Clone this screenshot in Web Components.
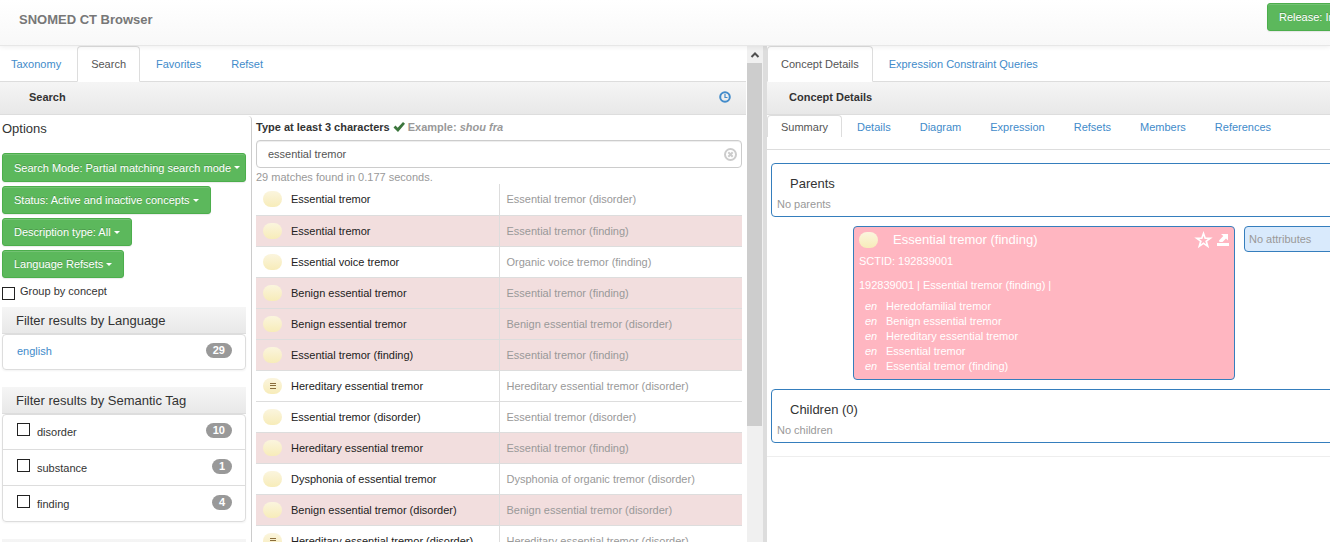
<!DOCTYPE html>
<html lang="en">
<head>
<meta charset="utf-8">
<title>SNOMED CT Browser</title>
<style>
html,body{margin:0;height:100%}
body{font:11px/16px "Liberation Sans",Arial,sans-serif;color:#333;background:#fff;overflow:hidden}
</style>
</head>
<body>
<ct-app></ct-app>
<script>
const define = (name, css, html, setup) => {
  const t = document.createElement('template');
  t.innerHTML = `<style>:host{display:block}*{box-sizing:border-box}a{text-decoration:none;color:#428bca}${css}</style>${html}`;
  customElements.define(name, class extends HTMLElement {
    constructor() {
      super();
      this.attachShadow({mode: 'open'}).append(t.content.cloneNode(true));
    }
    connectedCallback() {
      if (setup && !this.ready) { this.ready = true; setup(this, this.shadowRoot); }
    }
  });
};

/* Green Bootstrap-style button */
define('ct-button', `
:host{display:block}
button{font:inherit;color:#fff;background:#5cb85c;border:1px solid #4cae4c;border-radius:3px;height:28px;padding:0 11px;
 display:flex;align-items:center;gap:3px;white-space:nowrap;text-shadow:0 -1px 0 rgba(0,0,0,.2);box-shadow:inset 0 1px 0 rgba(255,255,255,.15),0 1px 1px rgba(0,0,0,.08)}
i{border:3px solid transparent;border-top-color:#fff;border-bottom:0}
:host([wide]) button{width:100%;height:29px;padding-right:4px}
:host([plain]) i{display:none}`,
`<button type="button"><slot></slot><i></i></button>`);

define('ct-header', `
:host{position:relative;z-index:1;min-width:0}
header{display:grid;grid-template-columns:minmax(0,1267fr) minmax(0,63fr);height:46px;border-bottom:1px solid #e7e7e7;background:linear-gradient(#fff,#f8f8f8);box-shadow:0 1px 5px rgba(0,0,0,.07)}
h1{margin:0;padding:10px 19px;font-size:13px;line-height:19px;font-weight:bold;color:#777}
ct-button{margin-top:3px;width:120px}`,
`<header><h1>SNOMED CT Browser</h1><ct-button plain>Release: In</ct-button></header>`);

/* Tab strip; labels come from the "items" attribute, first one or "active" is selected */
define('ct-tabs', `
nav{display:flex;gap:2px;height:36px;border-bottom:1px solid #ddd}
a{padding:9px 13px;border:1px solid transparent;border-radius:4px 4px 0 0;white-space:nowrap;height:36px}
a[aria-current]{color:#555;border-color:#ddd;border-bottom-color:#fff;background:#fff}
:host([inset]) nav{margin-left:-3px}
:host([sub]) nav{height:35px;gap:1px}
:host([sub]) a{padding:3px 13px;height:22px;border-bottom:0}`,
`<nav></nav>`, (el, root) => {
  const active = +el.getAttribute('active') || 0;
  root.querySelector('nav').innerHTML = el.getAttribute('items').split('|')
    .map((s, i) => `<a href="#"${i === active ? ' aria-current="page"' : ''}>${s}</a>`).join('');
});

define('ct-section-head', `
div{display:flex;align-items:center;justify-content:space-between;height:33px;padding:0 15px 2px 29px;background:linear-gradient(#f5f5f5,#e8e8e8);border-bottom:1px solid #ddd}
:host([details]) div{padding-left:22px}
h2{margin:0;font-size:11px;line-height:16px}`,
`<div><h2><slot></slot></h2><slot name="action"></slot></div>`);

define('ct-badge', `
:host{margin-left:auto}
span{display:block;min-width:19px;padding:0 7px;border-radius:10px;background:#999;color:#fff;font-size:11px;line-height:15px;font-weight:bold;text-align:center}`,
`<span><slot></slot></span>`);

define('ct-check', `
label{display:flex;gap:5px}
input{appearance:none;margin:0;width:13px;height:13px;border:1px solid #222;background:#fff;flex:none}
:host(:not([item])) input{margin-top:4px}
:host([item]) span{padding-top:1px}
:host([item]) label{gap:7px}`,
`<label><input type="checkbox"><span><slot></slot></span></label>`);

/* Titled filter list */
define('ct-filter', `
section{margin-bottom:17px}
h3{margin:0;padding:3px 14px 2px;height:27px;font-size:13px;line-height:22px;font-weight:normal;background:linear-gradient(#f5f5f5,#e8e8e8);border-bottom:1px solid #ddd}
ul{list-style:none;margin:0;padding:0;border:1px solid #ddd;border-radius:4px;box-shadow:0 1px 2px rgba(0,0,0,.05)}
li{display:flex;height:36px;padding:9px 13px 0 14px;border-top:1px solid #ddd}
li:first-child{border-top:0;height:34px;padding-top:8px}`,
`<section><h3></h3><ul></ul></section>`, (el, root) => {
  root.querySelector('h3').textContent = el.getAttribute('label');
  root.querySelector('ul').innerHTML = el.getAttribute('items').split('|').filter(Boolean).map(s => {
    const [name, count] = s.split(':');
    const body = el.hasAttribute('checks') ? `<ct-check item>${name}</ct-check>` : `<a href="#">${name}</a>`;
    return `<li>${body}<ct-badge>${count}</ct-badge></li>`;
  }).join('');
});

define('ct-options', `
:host{min-width:0}
aside{height:100%;padding:4px 5px 0 2px;border:solid #ccc;border-width:0 1px 0 0;border-radius:0 4px 0 0;margin-top:1px}
h3{margin:0 0 15px;font-size:13px;line-height:18px;font-weight:normal}
.buttons{display:flex;flex-direction:column;align-items:flex-start;gap:4px}
.buttons ct-button[wide]{width:100%}
ct-check{margin:5px 0 7px}`,
`<aside><h3>Options</h3><div class="buttons">
<ct-button wide>Search Mode: Partial matching search mode</ct-button>
<ct-button>Status: Active and inactive concepts</ct-button>
<ct-button>Description type: All</ct-button>
<ct-button>Language Refsets</ct-button></div>
<ct-check>Group by concept</ct-check>
<ct-filter label="Filter results by Language" items="english:29"></ct-filter>
<ct-filter checks label="Filter results by Semantic Tag" items="disorder:10|substance:1|finding:4"></ct-filter>
<ct-filter label="" items=""></ct-filter></aside>`);

/* Pale yellow pill; "defined" adds the equivalence mark */
define('ct-concept-icon', `
span{display:flex;align-items:center;justify-content:center;width:19px;height:16px;border-radius:8px;background:linear-gradient(#fbf5de,#f7ecb9)}
svg{display:none}
:host([defined]) svg{display:block}`,
`<span><svg width="6" height="6" stroke="#8a6d3b" shape-rendering="crispEdges"><path d="M0 .5h6M0 2.500h6M0 5.500h6"/></svg></span>`);

define('ct-results', `
table{width:100%;border-collapse:collapse;table-layout:fixed}
td{height:31px;padding:0 7px;border-bottom:1px solid #ddd;white-space:nowrap}
td:first-child{width:50%}
td+td{border-left:1px solid #ddd;color:#999}
tr.inactive{background:#f2dede}
div{display:flex;align-items:center;gap:9px;color:#222}`,
`<table><tbody></tbody></table>`, (el, root) => {
  const rows = [
    ['Essential tremor', 'Essential tremor (disorder)', ''],
    ['Essential tremor', 'Essential tremor (finding)', 'x'],
    ['Essential voice tremor', 'Organic voice tremor (finding)', ''],
    ['Benign essential tremor', 'Essential tremor (finding)', 'x'],
    ['Benign essential tremor', 'Benign essential tremor (disorder)', 'x'],
    ['Essential tremor (finding)', 'Essential tremor (finding)', 'x'],
    ['Hereditary essential tremor', 'Hereditary essential tremor (disorder)', 'd'],
    ['Essential tremor (disorder)', 'Essential tremor (disorder)', ''],
    ['Hereditary essential tremor', 'Essential tremor (finding)', 'x'],
    ['Dysphonia of essential tremor', 'Dysphonia of organic tremor (disorder)', ''],
    ['Benign essential tremor (disorder)', 'Benign essential tremor (disorder)', 'x'],
    ['Hereditary essential tremor (disorder)', 'Hereditary essential tremor (disorder)', 'd']
  ];
  root.querySelector('tbody').innerHTML = rows.map(([a, b, f]) =>
    `<tr${f === 'x' ? ' class="inactive"' : ''}><td><div><ct-concept-icon${f === 'd' ? ' defined' : ''}></ct-concept-icon>${a}</div></td><td>${b}</td></tr>`).join('');
});

define('ct-search', `
:host{min-width:0}
.wrap{padding:4px 4px 0 4px}
label{display:flex;align-items:center;font-weight:bold;gap:2px;height:16px}
label span{color:#999}
svg{display:block}
.field{display:flex;align-items:center;height:28px;margin:5px 0 1px;border:1px solid #ccc;border-radius:4px;padding:0 4px 0 11px;box-shadow:inset 0 1px 1px rgba(0,0,0,.075)}
input{flex:1;min-width:0;border:0;padding:0;background:none;outline:0;font:inherit;color:#555}
.field button{border:0;padding:0;background:none}
p{margin:0;height:15px;color:#999}`,
`<div class="wrap"><label for="q">Type at least 3 characters
<svg width="14" height="12" viewBox="0 0 14 12"><path d="M1.500 6.500l2-2 2.200 2.200L11 1l2 1.800L6 11z" fill="#3c763d"/></svg>
<span>Example: <em>shou fra</em></span></label>
<div class="field"><input id="q" type="text" value="essential tremor"><button type="button" aria-label="Clear"><svg width="13" height="13" viewBox="0 0 13 13" fill="none" stroke="#ccc" stroke-width="2"><circle cx="6.500" cy="6.500" r="5.500"/><path d="M4.300 4.300l4.400 4.400M8.700 4.300L4.300 8.700"/></svg></button></div>
<p>29 matches found in 0.177 seconds.</p>
<ct-results></ct-results></div>`);

define('ct-scrollbar', `
:host{display:flex;flex-direction:column;background:#f0f0f0}
svg{display:block;flex:none}
b{flex:363;background:#cdcdcd;margin:0 1px 0 0}
i{flex:116}`,
`<svg width="16" height="17" viewBox="0 0 16 17"><path d="M4.500 11L8 7.500 11.500 11" fill="none" stroke="#505050" stroke-width="2"/></svg><b></b><i></i>`);

define('ct-left', `
:host{display:grid;grid-template-columns:1fr 16px;min-width:0;min-height:0}
main{display:flex;flex-direction:column;min-height:0;min-width:0;overflow:hidden;margin-right:1px}
.cols{display:grid;grid-template-columns:minmax(0,252fr) minmax(0,494fr);flex:1;min-height:0}
svg{display:block}`,
`<main><ct-tabs inset active="1" items="Taxonomy|Search|Favorites|Refset"></ct-tabs>
<ct-section-head>Search<a slot="action" href="#" aria-label="History"><svg width="12" height="12" viewBox="0 0 12 12" fill="none" stroke="#428bca"><circle cx="6" cy="6" r="4.800" stroke-width="2"/><path d="M6 3v3.500h2.500" stroke-width="1.200"/></svg></a></ct-section-head>
<div class="cols"><ct-options></ct-options><ct-search></ct-search></div></main>
<ct-scrollbar></ct-scrollbar>`);

define('ct-box', `
section{border:1px solid #357ebd;border-radius:4px;height:54px;padding:10px 18px 0;background:#fff}
h3{margin:0;font-size:13px;line-height:20px;font-weight:normal}
p{margin:2px -13px 0;color:#999}`,
`<section><h3><slot name="title"></slot></h3><p><slot></slot></p></section>`);

define('ct-concept', `
article{color:#fff;background:#ffb6c1;border:1px solid #357ebd;border-radius:4px;padding:3px 5px 3px;height:154px}
header{display:flex;align-items:center;height:19px}
h3{margin:0 auto 0 15px;font-size:13px;line-height:19px;font-weight:normal}
svg{display:block}
a{color:#fff;margin-left:4px}
p{margin:4px 0 0}
p+p{margin-top:8px}
dl{display:grid;grid-template-columns:21px 1fr;margin:6px 0 0 6px;line-height:15px}
dt{font-style:italic}
dd{margin:0}`,
`<article><header><ct-concept-icon></ct-concept-icon><h3>Essential tremor (finding)</h3>
<a href="#" aria-label="Add to favorites"><svg width="19" height="18" viewBox="0 0 19 18"><path fill="#fff" fill-rule="evenodd" d="M9.500 0l2.300 6.400h6.900l-5.500 4.200 2 6.600-5.700-3.900-5.700 3.900 2-6.600L.3 6.400h6.900zM9.500 4.800L8.400 8.100H5.200l2.600 2-1 3.100 2.700-1.900 2.700 1.900-1-3.100 2.600-2h-3.200z"/></svg></a>
<a href="#" aria-label="Export"><svg width="12" height="12" viewBox="0 0 12 12" fill="#fff"><path d="M0 9h12v3H0zM4 0h7v6.500L9 4.600 5.500 8 2.500 8 2 6.500 6.300 2z"/></svg></a></header>
<p>SCTID: 192839001</p><p>192839001 | Essential tremor (finding) |</p>
<dl><dt>en</dt><dd>Heredofamilial tremor</dd><dt>en</dt><dd>Benign essential tremor</dd><dt>en</dt><dd>Hereditary essential tremor</dd><dt>en</dt><dd>Essential tremor</dd><dt>en</dt><dd>Essential tremor (finding)</dd></dl></article>`);

define('ct-right', `
:host{min-width:0;overflow:hidden}
.body{padding:13px 0 13px 4px;border-bottom:1px solid #eee}
.body>*{margin-right:-10px}
.row{display:grid;grid-template-columns:82fr 382fr 95fr;margin-top:9px;margin-bottom:9px;margin-right:0}
.row ct-concept{grid-column:2}
.attr{margin:0 -10px 0 9px;height:26px;line-height:24px;padding-left:4px;border:1px solid #357ebd;border-radius:4px;background:#d9eafc;color:#999;white-space:nowrap}`,
`<ct-tabs items="Concept Details|Expression Constraint Queries"></ct-tabs>
<ct-section-head details>Concept Details</ct-section-head>
<ct-tabs sub items="Summary|Details|Diagram|Expression|Refsets|Members|References"></ct-tabs>
<div class="body"><ct-box><span slot="title">Parents</span>No parents</ct-box>
<div class="row"><ct-concept></ct-concept><div class="attr">No attributes</div></div>
<ct-box><span slot="title">Children (0)</span>No children</ct-box></div>`);

define('ct-app', `
:host{display:grid;grid-template-columns:minmax(0,1fr);grid-template-rows:auto 1fr;height:100vh}
.panes{display:grid;grid-template-columns:minmax(0,763fr) 4px minmax(0,563fr);min-height:0}
.split{background:#ddd}`,
`<ct-header></ct-header><div class="panes"><ct-left></ct-left><div class="split"></div><ct-right></ct-right></div>`);
</script>
</body>
</html>
